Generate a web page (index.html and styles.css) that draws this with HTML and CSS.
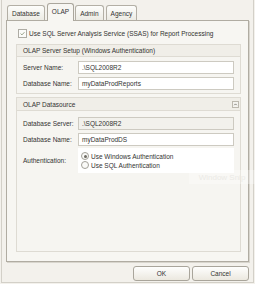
FILE: index.html
```html
<!DOCTYPE html>
<html>

<head>
  <meta charset="UTF-8" />
  <title>Report Server Settings</title>
  <link rel="stylesheet" href="styles.css">
</head>

<body>
  <div class="dialog">
    <div class="tabs">
      <div class="tab">Database</div>
      <div class="tab active">OLAP</div>
      <div class="tab">Admin</div>
      <div class="tab">Agency</div>
    </div>

    <div class="panel">
      <div class="check-row">
        <span class="checkbox">
          <svg viewBox="0 0 9 9">
            <polyline points="2 4.5 3.8 6.3 7 2.8" fill="none" stroke="#7d8a6c" stroke-width="1"></polyline>
          </svg>
        </span>
        Use SQL Server Analysis Service (SSAS) for Report Processing
      </div>

      <div class="group setup">
        <div class="group-head">OLAP Server Setup (Windows Authentication)</div>
        <div class="group-body">
          <div class="field">
            <span class="field-label">Server Name:</span>
            <div class="input">.\SQL2008R2</div>
          </div>
          <div class="field">
            <span class="field-label">Database Name:</span>
            <div class="input">myDataProdReports</div>
          </div>
        </div>
      </div>

      <div class="group datasource">
        <div class="group-head">
          OLAP Datasource
          <span class="collapse">
            <svg viewBox="0 0 6 6">
              <polyline points="1.5 3.8 3 2.3 4.5 3.8" fill="none" stroke="#6f6c64" stroke-width="1"></polyline>
            </svg>
          </span>
        </div>
        <div class="group-body">
          <div class="field">
            <span class="field-label">Database Server:</span>
            <div class="input disabled">.\SQL2008R2</div>
          </div>
          <div class="field">
            <span class="field-label">Database Name:</span>
            <div class="input">myDataProdDS</div>
          </div>
          <div class="field auth">
            <span class="field-label">Authentication:</span>
            <div class="radio-list">
              <div class="radio-row"><span class="radio checked"></span>Use Windows Authentication</div>
              <div class="radio-row"><span class="radio"></span>Use SQL Authentication</div>
            </div>
          </div>
        </div>
      </div>
    </div>

    <div class="actions">
      <button>OK</button>
      <button>Cancel</button>
    </div>

    <div class="snip">Window Snip</div>
  </div>
</body>

</html>
```

FILE: styles.css
```css
body {
  margin: 0;
  background-color: #f3f1ec;
  font-family: "Liberation Sans", Arial, sans-serif;
  font-size: 6.5px;
  color: #333331;
}

.dialog {
  position: relative;
  box-sizing: border-box;
  width: 253px;
  height: 283px;
  margin-left: 1px;
  padding: 3px 4px 0 3px;
  border: 1px solid #d3d0c8;
  border-top: none;
  display: flex;
  flex-direction: column;
}

.tabs {
  display: flex;
  align-items: flex-end;
  height: 17px;
  padding-left: 2px;
  gap: 2px;
}

.tab {
  box-sizing: border-box;
  height: 15px;
  padding: 0 4px;
  display: flex;
  align-items: center;
  border: 1px solid #b3afa5;
  border-bottom: none;
  border-radius: 3px 3px 0 0;
  background: linear-gradient(#fdfdfb, #ecebe4);
  margin-bottom: 0;
}

.tab.active {
  height: 18px;
  margin: 0 -1px -1px 0;
  padding: 0 4px 2px;
  background: #f7f6f2;
  position: relative;
  z-index: 1;
  border-color: #aaa69c;
}

.panel {
  box-sizing: border-box;
  width: 243px;
  height: 242px;
  margin-left: 1px;
  padding: 8px 7px 0 9px;
  background-color: #f7f6f2;
  border: 1px solid #b0aca2;
  box-shadow: 1px 1px 0 #d8d5cd;
  display: flex;
  flex-direction: column;
}

.check-row {
  display: flex;
  align-items: center;
  gap: 2px;
  height: 9px;
  padding-left: 2px;
}

.checkbox {
  box-sizing: border-box;
  width: 9px;
  height: 9px;
  border: 1px solid #aeaca4;
  background: #fbfbf9;
  display: flex;
}

.checkbox svg {
  width: 7px;
  height: 7px;
}

.group {
  box-sizing: border-box;
  border: 1px solid #dedbd3;
  background-color: #f6f5f1;
}

.setup {
  margin-top: 6px;
  height: 50px;
}

.datasource {
  margin-top: 3px;
  height: 155px;
}

.group-head {
  height: 11px;
  padding: 0 6px;
  display: flex;
  align-items: center;
  justify-content: space-between;
  background-color: #f0eee8;
  border-bottom: 1px solid #dedbd3;
}

.datasource .group-head {
  height: 12px;
  padding-right: 1px;
}

.collapse {
  box-sizing: border-box;
  width: 7px;
  height: 7px;
  border: 1px solid #bcb8ae;
  background: #f4f3ef;
  display: flex;
}

.collapse svg {
  width: 5px;
  height: 5px;
}

.group-body {
  display: flex;
  flex-direction: column;
  gap: 3px;
  padding: 4px 6px 0 6px;
}

.datasource .group-body {
  padding-top: 6px;
}

.field {
  display: flex;
  align-items: center;
}

.field-label {
  width: 55px;
  flex: none;
}

.input {
  box-sizing: border-box;
  flex: 1;
  height: 13px;
  padding: 0 3px;
  display: flex;
  align-items: center;
  background-color: #ffffff;
  border: 1px solid #cdcac1;
}

.input.disabled {
  background-color: #f2f1ec;
}

.auth {
  margin-top: -1px;
}

.radio-list {
  flex: 1;
  height: 25px;
  padding: 4px 0 0 3px;
  box-sizing: border-box;
  background-color: #ffffff;
  display: flex;
  flex-direction: column;
  gap: 1px;
}

.radio-row {
  display: flex;
  align-items: center;
  gap: 2px;
  height: 8px;
}

.radio {
  box-sizing: border-box;
  width: 8px;
  height: 8px;
  border: 1px solid #a3a098;
  border-radius: 50%;
  background: #fafaf8;
  display: flex;
  align-items: center;
  justify-content: center;
}

.radio.checked::after {
  content: "";
  width: 3px;
  height: 3px;
  border-radius: 50%;
  background-color: #6e6b63;
}

.actions {
  display: flex;
  justify-content: flex-end;
  gap: 2px;
  margin-top: 4px;
}

button {
  box-sizing: border-box;
  width: 57px;
  height: 15px;
  padding: 0;
  font-family: inherit;
  font-size: 6.5px;
  color: #333331;
  border: 1px solid #a9a59b;
  border-radius: 3px;
  background: linear-gradient(#fefefd, #ebe8df);
}

.snip {
  position: absolute;
  left: 187px;
  top: 170px;
  width: 66px;
  height: 14px;
  display: flex;
  align-items: center;
  justify-content: center;
  font-size: 8px;
  color: #ebeae6;
  background-color: rgba(255, 255, 255, 0.3);
}
```
